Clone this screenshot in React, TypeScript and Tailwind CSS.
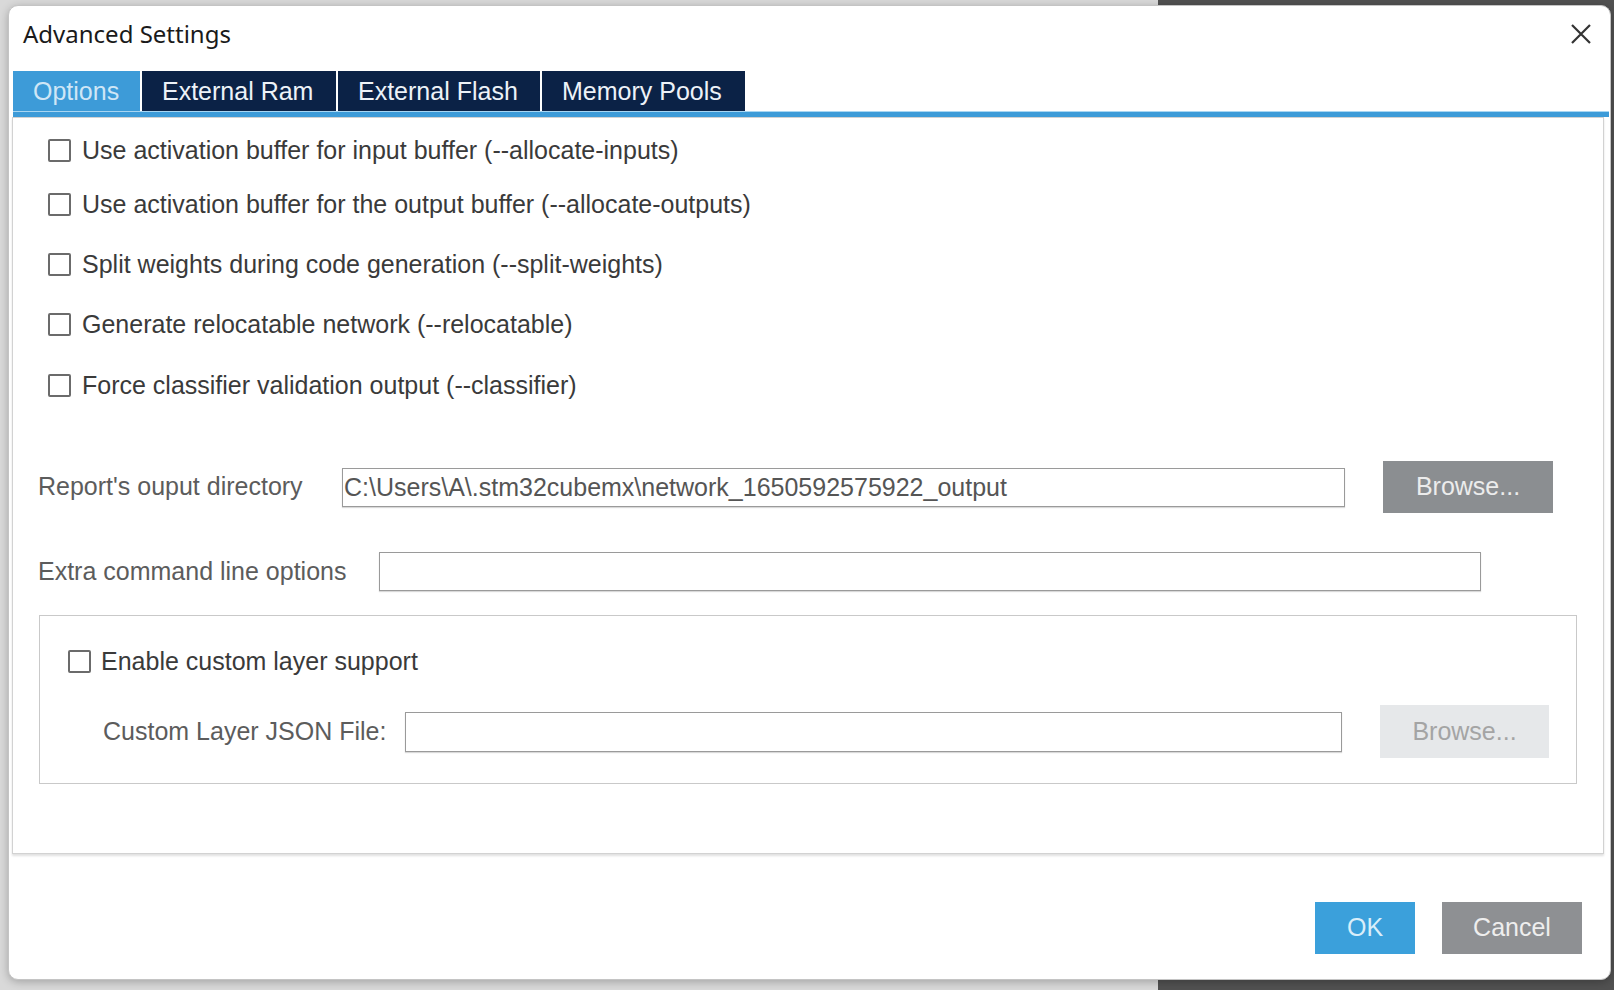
import React, { useState } from 'react';

const tabs = ['Options', 'External Ram', 'External Flash', 'Memory Pools'];
const tabWidths = ['w-[127px]', 'w-[194px]', 'w-[202px]', 'w-[203px]'];

const options = [
  { label: 'Use activation buffer for input buffer (--allocate-inputs)', mt: 'mt-[17px]' },
  { label: 'Use activation buffer for the output buffer (--allocate-outputs)', mt: 'mt-[24px]' },
  { label: 'Split weights during code generation (--split-weights)', mt: 'mt-[30px]' },
  { label: 'Generate relocatable network (--relocatable)', mt: 'mt-[30px]' },
  { label: 'Force classifier validation output (--classifier)', mt: 'mt-[31px]' },
];

function CheckBox({ checked, onChange }: { checked: boolean; onChange: () => void }) {
  return (
    <button
      type="button"
      onClick={onChange}
      className="w-[23px] h-[23px] shrink-0 border-2 border-[#6b6b6b] rounded-[2px] bg-white flex items-center justify-center"
    >
      {checked && (
        <svg viewBox="0 0 16 16" className="w-[16px] h-[16px]">
          <path d="M3 8.5l3 3 7-7" fill="none" stroke="#333" strokeWidth="2" />
        </svg>
      )}
    </button>
  );
}

export default function App() {
  const [activeTab, setActiveTab] = useState(0);
  const [checked, setChecked] = useState<boolean[]>([false, false, false, false, false]);
  const [customLayer, setCustomLayer] = useState(false);
  const [outputDir, setOutputDir] = useState('C:\\Users\\A\\.stm32cubemx\\network_1650592575922_output');
  const [extraOptions, setExtraOptions] = useState('');
  const [jsonFile, setJsonFile] = useState('');

  const toggle = (i: number) => setChecked(checked.map((c, j) => (j === i ? !c : c)));

  return (
    <div
      className="w-[1614px] h-[990px] overflow-hidden pt-[5px] pl-[8px] bg-[linear-gradient(to_right,#d9d9d9_1158px,#515151_1158px)]"
      style={{ fontFamily: '"Liberation Sans", Arial, sans-serif' }}
    >
      <div className="w-[1603px] h-[975px] bg-white rounded-[10px] border border-[#c4c4c4] shadow-[0_2px_8px_rgba(0,0,0,0.25)] flex flex-col">
        {/* title bar */}
        <div className="h-[65px] flex items-start justify-between pl-[14px] pr-[16px] pt-[13px]">
          <span
            className="text-[24px] leading-[30px] text-[#1a1a1a]"
            style={{ fontFamily: '"Noto Sans", "Open Sans", sans-serif' }}
          >
            Advanced Settings
          </span>
          <button type="button" className="w-[26px] h-[30px] flex items-center justify-center">
            <svg viewBox="0 0 22 22" className="w-[22px] h-[22px]">
              <path d="M2 2L20 20M20 2L2 20" stroke="#333" strokeWidth="2.2" fill="none" />
            </svg>
          </button>
        </div>

        {/* tabs */}
        <div className="ml-[4px] mr-[1px]">
          <div className="flex gap-[2px]">
            {tabs.map((tab, i) => (
              <button
                key={tab}
                type="button"
                onClick={() => setActiveTab(i)}
                className={
                  tabWidths[i] +
                  ' h-[40px] text-[25px] leading-[40px] text-left pl-[20px] ' +
                  (i === activeTab ? 'bg-[#3d9bd8] text-[#cfe6f6]' : 'bg-[#0b2246] text-[#edf2f8]')
                }
              >
                {tab}
              </button>
            ))}
          </div>
          <div className="h-[6px] bg-[#3d9bd8] border-t border-[#a8d6f2]" />
        </div>

        {/* options panel */}
        <div className="ml-[3px] mr-[6px] h-[737px] border border-[#d2d2d2] shadow-[0_2px_2px_rgba(0,0,0,0.12)] pl-[25px] flex flex-col">
          {options.map((opt, i) => (
            <label key={opt.label} className={opt.mt + ' ml-[10px] h-[30px] flex items-center gap-[11px] cursor-pointer'}>
              <CheckBox checked={checked[i]} onChange={() => toggle(i)} />
              <span className="text-[25px] text-[#3a3a3a] leading-[30px]">{opt.label}</span>
            </label>
          ))}

          <div className="mt-[61px] h-[52px] flex items-center">
            <span className="w-[304px] text-[25px] text-[#5c5c5c]">Report's ouput directory</span>
            <input
              value={outputDir}
              onChange={(e) => setOutputDir(e.target.value)}
              className="w-[1003px] h-[39px] border border-[#9a9a9a] shadow-[0_1px_1px_rgba(0,0,0,0.15)] px-[1px] text-[25px] text-[#555] outline-none"
            />
            <button
              type="button"
              className="ml-[38px] w-[170px] h-[52px] bg-[#8b8e91] text-[#ececec] text-[25px]"
            >
              Browse...
            </button>
          </div>

          <div className="mt-[39px] h-[39px] flex items-center">
            <span className="w-[341px] text-[25px] text-[#5c5c5c]">Extra command line options</span>
            <input
              value={extraOptions}
              onChange={(e) => setExtraOptions(e.target.value)}
              className="w-[1102px] h-[39px] border border-[#9a9a9a] shadow-[0_1px_1px_rgba(0,0,0,0.15)] px-[4px] text-[25px] text-[#555] outline-none"
            />
          </div>

          {/* custom layer group */}
          <div className="mt-[24px] ml-[1px] w-[1538px] h-[169px] border border-[#c9c9c9] pl-[28px] flex flex-col">
            <label className="mt-[30px] h-[30px] flex items-center gap-[10px] cursor-pointer">
              <CheckBox checked={customLayer} onChange={() => setCustomLayer(!customLayer)} />
              <span className="text-[25px] text-[#3a3a3a] leading-[30px]">Enable custom layer support</span>
            </label>
            <div className="mt-[29px] ml-[35px] h-[53px] flex items-center">
              <span className="w-[302px] text-[25px] text-[#5c5c5c]">Custom Layer JSON File:</span>
              <input
                value={jsonFile}
                onChange={(e) => setJsonFile(e.target.value)}
                disabled={!customLayer}
                className="w-[937px] h-[40px] border border-[#9a9a9a] shadow-[0_1px_1px_rgba(0,0,0,0.15)] bg-white px-[4px] text-[25px] text-[#555] outline-none"
              />
              <button
                type="button"
                disabled={!customLayer}
                className="ml-[38px] w-[169px] h-[53px] bg-[#e6e8ea] text-[#a4a4a4] text-[25px]"
              >
                Browse...
              </button>
            </div>
          </div>
        </div>

        {/* footer buttons */}
        <div className="mt-[48px] flex justify-end gap-[27px] pr-[28px]">
          <button type="button" className="w-[100px] h-[52px] bg-[#3ba0db] text-[#d9eefa] text-[25px]">
            OK
          </button>
          <button type="button" className="w-[140px] h-[52px] bg-[#8e9093] text-[#eeeeee] text-[25px]">
            Cancel
          </button>
        </div>
      </div>
    </div>
  );
}
